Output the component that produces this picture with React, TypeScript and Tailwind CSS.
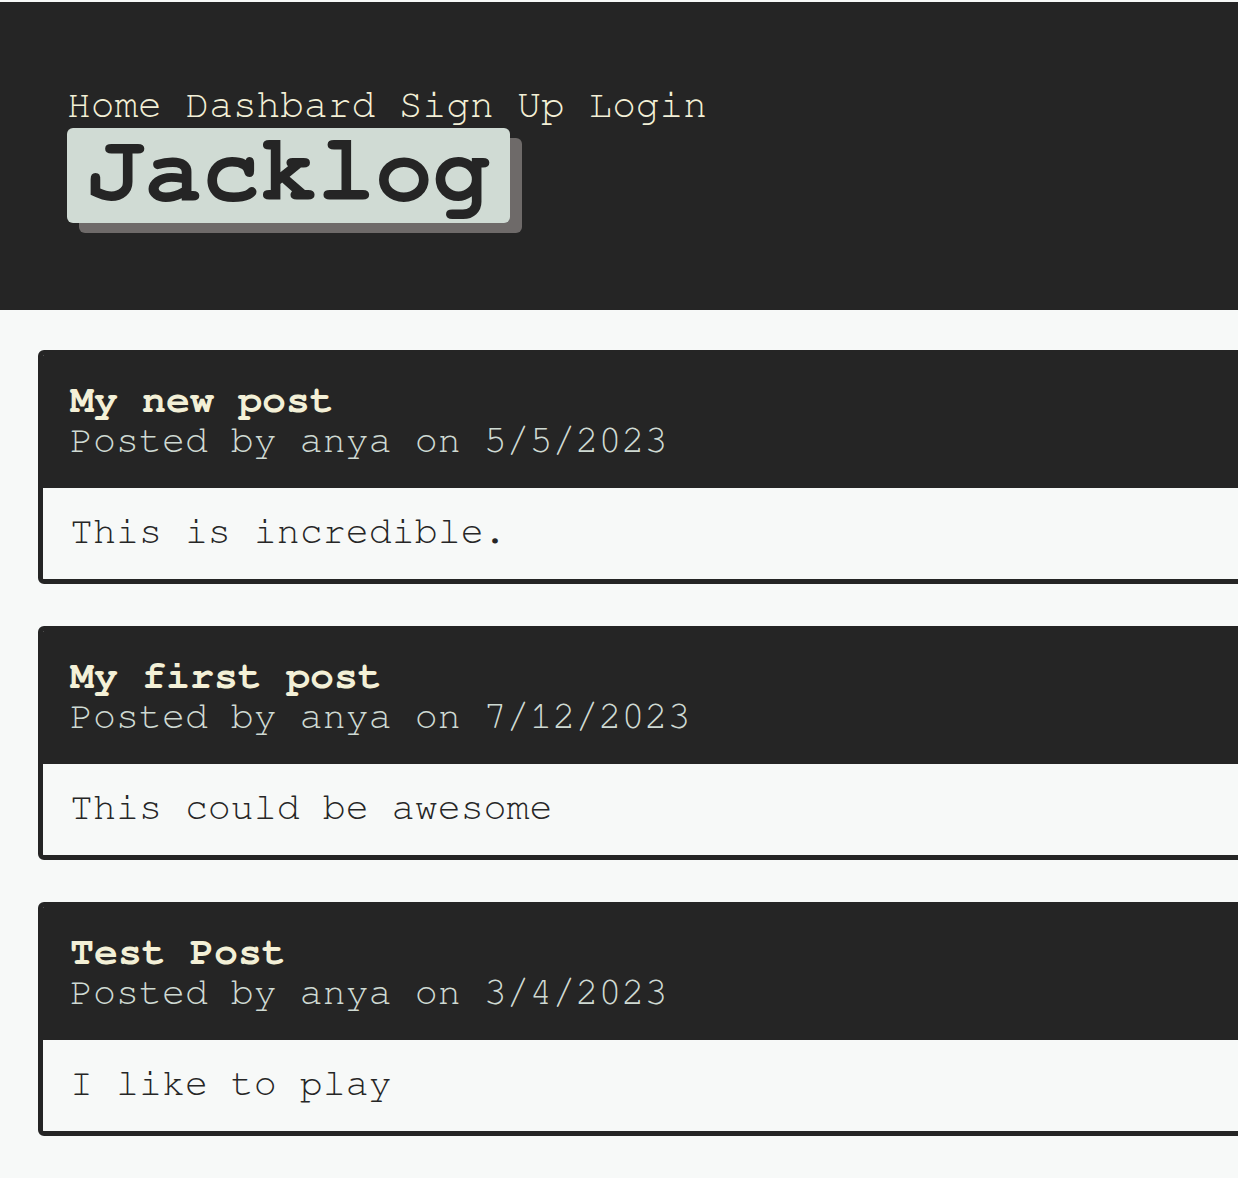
import React from "react";

const posts = [
  { title: "My new post", author: "anya", date: "5/5/2023", body: "This is incredible." },
  { title: "My first post", author: "anya", date: "7/12/2023", body: "This could be awesome" },
  { title: "Test Post", author: "anya", date: "3/4/2023", body: "I like to play" },
];

export default function App() {
  return (
    <div
      className="min-h-[1178px] bg-[#f7f9f8] overflow-hidden pt-[2px]"
      style={{ fontFamily: '"Nimbus Mono PS", "Nimbus Mono L", FreeMono, Courier, "Liberation Mono", "Courier New", monospace' }}
    >
      <header className="bg-[#252525] pl-[67px] pt-[84px] pb-[87px]">
        <nav className="text-[39.5px] leading-[39px] mb-[3px] text-[#f3f0d7] whitespace-pre">
          <a>Home</a> <a>Dashbard</a> <a>Sign Up</a> <a>Login</a>
        </nav>
        <div className="inline-block">
          <h1 className="h-[95px] px-[20px] rounded-md bg-[#d0dbd4] text-[#252525] text-[96px] leading-[86px] font-bold shadow-[12px_10px_0_#6e6a69]">
            Jacklog
          </h1>
        </div>
      </header>
      <main className="pl-[38px] pt-[40px] pb-[40px] flex flex-col gap-[42px]">
        {posts.map((p) => (
          <article
            key={p.title}
            className="w-[1300px] shrink-0 border-[5px] border-[#252525] rounded-md overflow-hidden"
          >
            <div className="bg-[#252525] pl-[27px] pt-[25px] pb-[28px]">
              <h2 className="text-[40px] leading-[41px] font-bold text-[#f3f0d7]">{p.title}</h2>
              <p className="text-[38.3px] leading-[39px] text-[#cfdad3] whitespace-pre">
                Posted by {p.author} on {p.date}
              </p>
            </div>
            <div className="bg-[#f7f9f8] pl-[27px] pt-[24px] pb-[28px]">
              <p className="text-[38.3px] leading-[39px] text-[#262626] whitespace-pre">{p.body}</p>
            </div>
          </article>
        ))}
      </main>
    </div>
  );
}
